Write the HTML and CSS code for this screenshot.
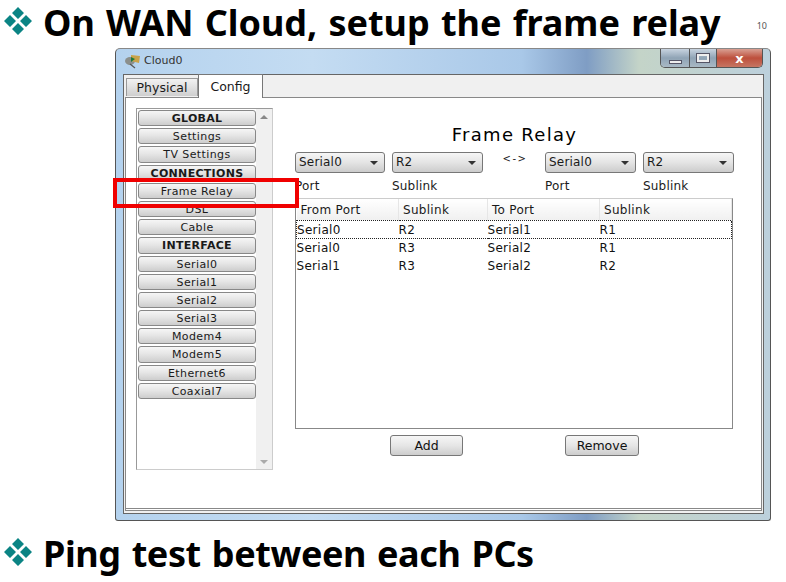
FILE: index.html
```html
<!DOCTYPE html>
<html lang="en">
<head>
    <meta charset="UTF-8">
    <title>Frame relay slide</title>
    <link rel="stylesheet" href="styles.css">
</head>
<body>

    <h1 class="slide-title">
        <svg class="bullet" viewBox="0 0 28 28"><path d="M14 0l6 6-6 6-6-6zM6 8l6 6-6 6-6-6zM22 8l6 6-6 6-6-6zM14 16l6 6-6 6-6-6z"/></svg>
        <span>On WAN Cloud, setup the frame relay</span>
        <span class="page-no">10</span>
    </h1>

    <div class="window">
        <div class="titlebar">
            <div class="title-left">
                <svg class="cloud-icon" width="18" height="16" viewBox="0 0 18 16">
                    <ellipse cx="6" cy="8" rx="5" ry="4" fill="#8b8f8c"/>
                    <path d="M6 11l5 4" stroke="#555" stroke-width="1.2"/>
                    <path d="M7 2l9 1-1 7-8-2z" fill="#c9a24a"/>
                    <path d="M7 4l4 2-4 3z" fill="#1e7a3c"/>
                </svg>
                <span>Cloud0</span>
            </div>
            <div class="win-buttons">
                <div class="win-btn min"><i></i></div>
                <div class="win-btn max"><i></i></div>
                <div class="win-btn close">x</div>
            </div>
        </div>

        <div class="client">
            <div class="tabs">
                <div class="tab">Physical</div>
                <div class="tab active">Config</div>
            </div>

            <div class="config">
                <div class="sidebar">
                    <div class="side-list">
                        <div class="side-btn head">GLOBAL</div>
                        <div class="side-btn">Settings</div>
                        <div class="side-btn">TV Settings</div>
                        <div class="side-btn head">CONNECTIONS</div>
                        <div class="side-btn">Frame Relay</div>
                        <div class="side-btn">DSL</div>
                        <div class="side-btn">Cable</div>
                        <div class="side-btn head">INTERFACE</div>
                        <div class="side-btn">Serial0</div>
                        <div class="side-btn">Serial1</div>
                        <div class="side-btn">Serial2</div>
                        <div class="side-btn">Serial3</div>
                        <div class="side-btn">Modem4</div>
                        <div class="side-btn">Modem5</div>
                        <div class="side-btn">Ethernet6</div>
                        <div class="side-btn">Coaxial7</div>
                    </div>
                    <div class="scrollbar">
                        <span class="arrow up"></span>
                        <span class="arrow down"></span>
                    </div>
                </div>

                <div class="main">
                    <h2 class="panel-title">Frame Relay</h2>
                    <div class="picker">
                        <div class="select">Serial0</div>
                        <div class="select">R2</div>
                        <div class="link-sign">&lt;-&gt;</div>
                        <div class="select">Serial0</div>
                        <div class="select">R2</div>
                        <div class="pick-label">Port</div>
                        <div class="pick-label">Sublink</div>
                        <div></div>
                        <div class="pick-label">Port</div>
                        <div class="pick-label">Sublink</div>
                    </div>

                    <div class="table-box">
                        <table>
                            <tr>
                                <th class="col-a">From Port</th>
                                <th class="col-b">Sublink</th>
                                <th class="col-c">To Port</th>
                                <th>Sublink</th>
                            </tr>
                            <tr class="selected">
                                <td>Serial0</td><td>R2</td><td>Serial1</td><td>R1</td>
                            </tr>
                            <tr>
                                <td>Serial0</td><td>R3</td><td>Serial2</td><td>R1</td>
                            </tr>
                            <tr>
                                <td>Serial1</td><td>R3</td><td>Serial2</td><td>R2</td>
                            </tr>
                        </table>
                    </div>

                    <div class="actions">
                        <button class="add">Add</button>
                        <button class="remove">Remove</button>
                    </div>
                </div>
            </div>
        </div>

        <!-- red highlight around the Frame Relay button -->
        <div class="highlight"></div>
    </div>

    <h1 class="slide-title second">
        <svg class="bullet" viewBox="0 0 28 28"><path d="M14 0l6 6-6 6-6-6zM6 8l6 6-6 6-6-6zM22 8l6 6-6 6-6-6zM14 16l6 6-6 6-6-6z"/></svg>
        <span>Ping test between each PCs</span>
    </h1>

</body>
</html>
```

FILE: styles.css
```css
body {
    margin: 0;
    background-color: white;
    font-family: "DejaVu Sans", sans-serif;
    color: #1a1a1a;
}

.slide-title {
    display: flex;
    align-items: center;
    gap: 11px;
    box-sizing: border-box;
    height: 48px;
    margin: 0;
    padding: 0 0 2px 4px;
    font-family: "Noto Sans", sans-serif;
    font-size: 36px;
    line-height: 46px;
    font-weight: 700;
    color: black;
    word-spacing: 2px;
    letter-spacing: -0.05px;
    white-space: nowrap;
}

.slide-title.second {
    height: 50px;
    margin-top: 9px;
    letter-spacing: -0.4px;
}

.bullet {
    width: 28px;
    height: 28px;
    margin-top: -4px;
    fill: #0b8484;
    flex: none;
}

.page-no {
    margin: 6px 0 0 25px;
    font-size: 9px;
    line-height: 12px;
    font-weight: 400;
    color: #555;
}

.window {
    position: relative;
    box-sizing: border-box;
    width: 656px;
    height: 473px;
    margin-left: 115px;
    padding: 0 6px 7px 7px;
    border: 1px solid #555;
    border-top-color: #888;
    border-radius: 5px 5px 3px 3px;
    background:
        linear-gradient(90deg, #b4d2ee 0%, #c4dcf2 30%, #a9c8e8 62%, #7f9dc4 72%, #c4d4c8 80%, #bcd0dc 100%);
}

.titlebar {
    display: flex;
    justify-content: space-between;
    height: 25px;
}

.title-left {
    display: flex;
    align-items: center;
    gap: 2px;
    padding: 0 0 2px 1px;
    font-size: 11px;
    color: #333;
}

.win-buttons {
    display: flex;
    height: 18px;
    margin-right: 1px;
    border: 1px solid #555;
    border-top: none;
    border-radius: 0 0 5px 5px;
    overflow: hidden;
}

.win-btn {
    display: flex;
    align-items: center;
    justify-content: center;
    background: linear-gradient(#c8d4e0, #8fa3b5 50%, #a9b9c4);
}

.win-btn.min {
    width: 28px;
    border-right: 1px solid #555;
}

.win-btn.min i {
    width: 11px;
    height: 2px;
    margin-top: 7px;
    background: #eee;
    border: 1px solid #556;
}

.win-btn.max {
    width: 26px;
    border-right: 1px solid #555;
}

.win-btn.max i {
    width: 8px;
    height: 4px;
    border: 2px solid #eee;
    outline: 1px solid #556;
}

.win-btn.close {
    width: 45px;
    background: linear-gradient(#d9a093, #bd4f3c 50%, #c67562);
    color: white;
    font-size: 13px;
    font-weight: 700;
    line-height: 1;
}

.client {
    height: 440px;
    box-sizing: border-box;
    border: 1px solid #666;
    background-color: #f0f0f0;
}

.tabs {
    display: flex;
    align-items: flex-end;
    height: 22px;
    padding-left: 2px;
    font-size: 12.5px;
}

.tab {
    box-sizing: border-box;
    height: 18px;
    width: 72px;
    margin-bottom: 1px;
    padding-top: 1px;
    text-align: center;
    border: 1px solid #999;
    border-bottom: none;
    background: linear-gradient(#f2f2f2, #cfcfcf);
}

.tab.active {
    position: relative;
    height: 24px;
    width: 65px;
    margin-bottom: -1px;
    padding-top: 4px;
    background: white;
    border-color: #777;
}

.config {
    display: flex;
    gap: 22px;
    height: 414px;
    box-sizing: border-box;
    margin: 0 1px;
    padding: 10px 0 0 10px;
    background-color: white;
    border: 1px solid #888;
    border-bottom: 3px double #888;
}

.sidebar {
    display: flex;
    box-sizing: border-box;
    width: 137px;
    height: 362px;
    border: 1px solid #999;
    border-right-color: #ccc;
    border-bottom-color: #ccc;
}

.side-list {
    display: grid;
    grid-auto-rows: 16.2px;
    row-gap: 2px;
    align-content: start;
    width: 118px;
    padding: 1px 0 0 1px;
}

.side-btn {
    box-sizing: border-box;
    padding-top: 1px;
    border: 1px solid #888;
    border-radius: 3px;
    background: linear-gradient(#f6f6f6, #e6e6e6 45%, #cdcdcd);
    font-size: 11px;
    line-height: 14px;
    text-align: center;
    letter-spacing: 0.4px;
    white-space: nowrap;
}

.side-btn.head {
    font-weight: 700;
    letter-spacing: 0.3px;
}

.scrollbar {
    position: relative;
    flex: 1;
    background-color: #f0f0f0;
}

.arrow {
    position: absolute;
    left: 4px;
    border-left: 4px solid transparent;
    border-right: 4px solid transparent;
}

.arrow.up {
    top: 6px;
    border-bottom: 4px solid #888;
}

.arrow.down {
    bottom: 5px;
    border-top: 4px solid #aaa;
}

.main {
    width: 439px;
}

.panel-title {
    margin: 15px 0 0;
    height: 29px;
    text-align: center;
    font-size: 18px;
    font-weight: 400;
    line-height: 24px;
    letter-spacing: 1.3px;
    color: black;
}

.picker {
    display: grid;
    grid-template-columns: 90px 91px 48px 91px 91px;
    grid-template-rows: 21px 25px;
    column-gap: 7px;
    font-size: 12px;
}

.select {
    position: relative;
    box-sizing: border-box;
    padding-left: 3px;
    border: 1px solid #777;
    border-radius: 3px;
    background: linear-gradient(#f6f6f6, #e4e4e4 50%, #cccccc);
    line-height: 19px;
    letter-spacing: 0.2px;
}

.select::after {
    content: "";
    position: absolute;
    right: 6px;
    top: 8px;
    border-left: 4px solid transparent;
    border-right: 4px solid transparent;
    border-top: 4px solid #333;
}

.link-sign {
    padding-left: 2px;
    text-align: center;
    font-size: 10px;
    line-height: 14px;
    letter-spacing: 1.5px;
}

.pick-label {
    padding-top: 6px;
    letter-spacing: 0.2px;
}

.table-box {
    box-sizing: border-box;
    width: 438px;
    height: 231px;
    border: 1px solid #888;
    border-top-color: #ccc;
}

table {
    width: 100%;
    border-collapse: collapse;
    table-layout: fixed;
    font-size: 12px;
    letter-spacing: 0.3px;
}

th {
    box-sizing: border-box;
    height: 21px;
    padding: 2px 0 0 4px;
    text-align: left;
    font-weight: 400;
    border-right: 1px solid #e6e6e6;
    background: linear-gradient(#ffffff, #f0f0f0);
}

th.col-a { width: 102px; }
th.col-b { width: 89px; }
th.col-c { width: 112px; }

td {
    box-sizing: border-box;
    height: 18px;
    padding: 1px 0 0 0;
    color: #111;
}

.selected td {
    border-top: 1px dotted #222;
    border-bottom: 1px dotted #222;
}

.selected td:first-child {
    border-left: 1px dotted #222;
}

.selected td:last-child {
    border-right: 1px dotted #222;
}

.actions {
    display: flex;
    gap: 102px;
    margin-top: 6px;
    padding-left: 95px;
}

button {
    box-sizing: border-box;
    height: 21px;
    padding: 0;
    border: 1px solid #777;
    border-radius: 3px;
    background: linear-gradient(#f6f6f6, #e6e6e6 50%, #cdcdcd);
    font-family: "DejaVu Sans", sans-serif;
    font-size: 12.5px;
    color: #111;
}

.add { width: 73px; }
.remove { width: 74px; }

.highlight {
    position: absolute;
    left: -3px;
    top: 129px;
    width: 178px;
    height: 22px;
    border: 4px solid #f00000;
}
```
